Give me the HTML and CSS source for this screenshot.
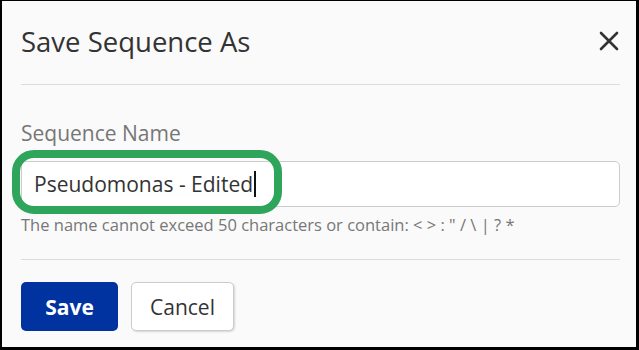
FILE: index.html
```html
<!DOCTYPE html>
<html lang="en">
  <head>
    <meta charset="UTF-8" />
    <meta name="viewport" content="width=device-width, initial-scale=1.0" />
    <title>Save Sequence As</title>
    <link rel="stylesheet" href="styles.css">
  </head>
  <body>
    <div class="dialog">
      <header class="dialog-header">
        <h1>Save Sequence As</h1>
        <button class="close-btn" aria-label="Close">
          <svg width="20" height="20" viewBox="0 0 20 20">
            <path d="M2 2 L18 18 M18 2 L2 18" stroke="#333" stroke-width="2.6" stroke-linecap="round" />
          </svg>
        </button>
      </header>
      <main class="dialog-body">
        <label for="seq-name">Sequence Name</label>
        <div class="input-wrap">
          <div class="name-input" id="seq-name">Pseudomonas - Edited<span class="caret"></span></div>
          <div class="highlight"></div>
        </div>
        <p class="help">The name cannot exceed 50 characters or contain: &lt; &gt; : " / \ | ? *</p>
      </main>
      <footer class="dialog-footer">
        <button class="btn btn-primary">Save</button>
        <button class="btn btn-default">Cancel</button>
      </footer>
    </div>
  </body>
</html>
```

FILE: styles.css
```css
* {
  margin: 0;
  padding: 0;
  box-sizing: border-box;
  font-family: 'Open Sans', sans-serif;
}

body {
  width: 639px;
  height: 350px;
  overflow: hidden;
  background-color: #fafafa;
}

.dialog {
  height: 350px;
  border-style: solid;
  border-color: #000;
  border-width: 1px 3px 3px 2px;
  background-color: #fafafa;
  padding: 0 16px 0 19px;
}

.dialog-header {
  display: flex;
  align-items: center;
  justify-content: space-between;
  height: 84px;
  border-bottom: 1px solid #ddd;
}

.dialog-header h1 {
  font-size: 27.5px;
  font-weight: 500;
  color: #333;
  padding-bottom: 2px;
}

.close-btn {
  border: none;
  background: none;
  display: flex;
  margin-right: 1px;
  margin-bottom: 4px;
}

.dialog-body {
  padding-top: 34px;
  height: 175px;
  border-bottom: 1px solid #ddd;
}

label {
  display: block;
  font-size: 21px;
  color: #767676;
  line-height: 28px;
  margin-bottom: 14px;
}

.input-wrap {
  position: relative;
}

.name-input {
  height: 46px;
  background-color: #fff;
  border: 1px solid #ccc;
  border-radius: 5px;
  padding: 0 12px;
  font-size: 21px;
  color: #333;
  display: flex;
  align-items: center;
}

.caret {
  display: inline-block;
  width: 2px;
  height: 26px;
  background-color: #111;
  margin-left: 1px;
}

.highlight {
  position: absolute;
  left: -9px;
  top: -11px;
  width: 270px;
  height: 64px;
  border: 8px solid #2ea55a;
  border-radius: 22px;
}

.help {
  font-size: 16.5px;
  color: #777;
  margin-top: 6px;
}

.dialog-footer {
  display: flex;
  gap: 13px;
  padding-top: 22px;
}

.btn {
  height: 49px;
  border-radius: 5px;
  font-size: 21px;
  cursor: pointer;
}

.btn-primary {
  width: 97px;
  border: none;
  background-color: #0033a0;
  color: #fff;
  font-weight: 700;
}

.btn-default {
  width: 103px;
  border: 1px solid #ccc;
  background-color: #fff;
  color: #333;
  box-shadow: 1px 1px 2px rgba(0, 0, 0, 0.15);
}
```
